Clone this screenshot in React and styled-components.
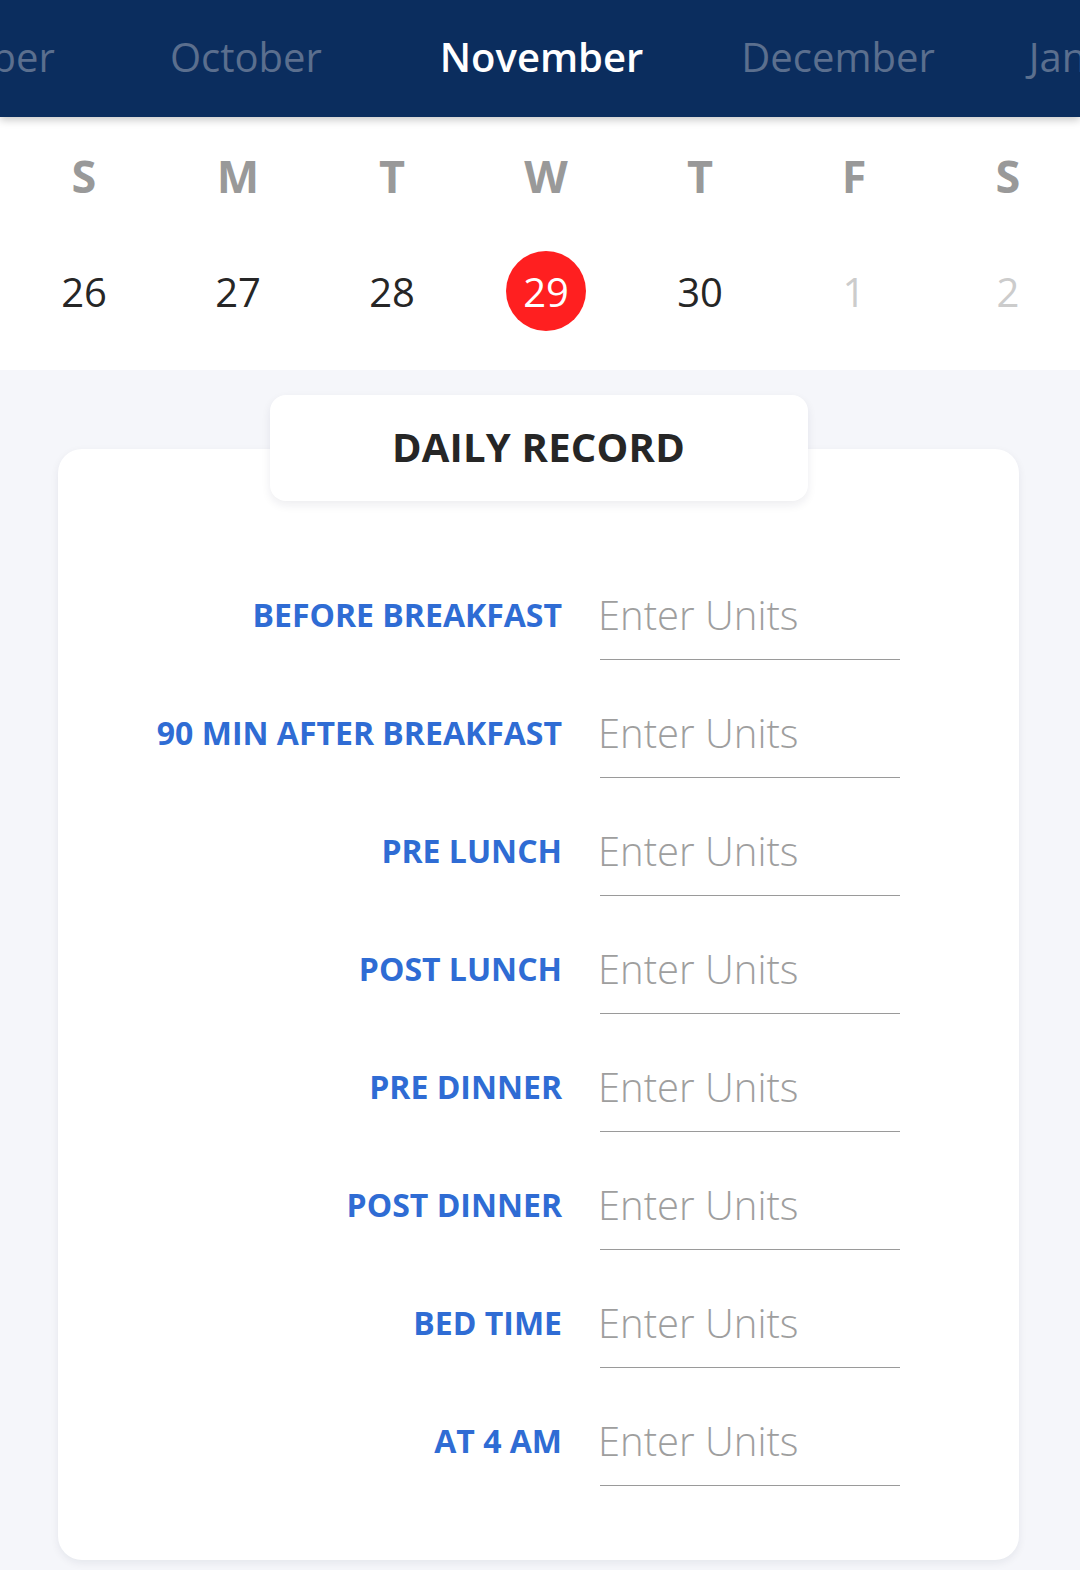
import React from "react";
import styled, { createGlobalStyle } from "styled-components";

const GlobalStyle = createGlobalStyle`
  body {
    margin: 0;
    background: #f5f6fa;
    font-family: "Open Sans", "Noto Sans", sans-serif;
  }
  * {
    box-sizing: border-box;
  }
`;

const Page = styled.div`
  width: 1080px;
  min-height: 1570px;
  background: #f5f6fa;
  overflow: hidden;
`;

const MonthBar = styled.div`
  position: relative;
  z-index: 2;
  height: 117px;
  padding-bottom: 4px;
  background: #0b2d5e;
  display: flex;
  align-items: center;
  box-shadow: 0 3px 8px rgba(0, 0, 0, 0.22);
  overflow: hidden;
`;

const MonthStrip = styled.div`
  display: flex;
`;

const Month = styled.div`
  flex: none;
  margin-left: ${(p) => p.lead}px;
  font-size: 40px;
  line-height: 56px;
  font-weight: ${(p) => (p.active ? 600 : 400)};
  color: ${(p) => (p.active ? "#ffffff" : "#5b6f8e")};
  white-space: nowrap;
`;

const Calendar = styled.div`
  background: #ffffff;
  padding: 0 0 39px 7px;
`;

const WeekRow = styled.div`
  display: grid;
  grid-template-columns: repeat(7, 154px);
  align-items: center;
  height: ${(p) => p.height}px;
  margin-top: ${(p) => p.top || 0}px;
`;

const DayLetter = styled.div`
  text-align: center;
  font-size: 45px;
  font-weight: 700;
  color: #999999;
  line-height: 1;
`;

const DateCell = styled.div`
  display: flex;
  justify-content: center;
`;

const DateNum = styled.div`
  width: 80px;
  height: 80px;
  border-radius: 50%;
  display: flex;
  align-items: center;
  justify-content: center;
  font-size: 40px;
  font-weight: 400;
  background: ${(p) => (p.selected ? "#ff1f20" : "transparent")};
  color: ${(p) => (p.selected ? "#ffffff" : p.muted ? "#cccccc" : "#262626")};
`;

const Content = styled.div`
  padding: 25px 61px 10px 58px;
  display: flex;
  flex-direction: column;
  align-items: center;
`;

const TitleCard = styled.div`
  position: relative;
  z-index: 1;
  width: 538px;
  height: 106px;
  margin-bottom: -52px;
  padding-bottom: 4px;
  background: #ffffff;
  border-radius: 16px;
  box-shadow: 0 4px 10px rgba(20, 30, 60, 0.08);
  display: flex;
  align-items: center;
  justify-content: center;
  font-size: 40px;
  font-weight: 700;
  color: #262626;
  letter-spacing: 0.2px;
`;

const RecordCard = styled.div`
  width: 961px;
  background: #ffffff;
  border-radius: 24px;
  box-shadow: 0 3px 8px rgba(20, 30, 60, 0.07);
  padding: 121px 0 74px;
  display: flex;
  flex-direction: column;
  gap: 28px;
`;

const Row = styled.div`
  display: grid;
  grid-template-columns: 504px 300px;
  column-gap: 38px;
  align-items: center;
`;

const Label = styled.label`
  text-align: right;
  font-size: 32px;
  font-weight: 700;
  color: #2f6cd4;
  white-space: nowrap;
  margin-top: -2px;
`;

const UnitInput = styled.input`
  width: 300px;
  height: 90px;
  border: none;
  border-bottom: 1.5px solid #9a9a9a;
  outline: none;
  padding: 0;
  text-indent: -2px;
  background: transparent;
  font-family: "Open Sans", sans-serif;
  font-size: 40px;
  font-weight: 300;
  color: #262626;

  &::placeholder {
    color: #9e9e9e;
    font-weight: 300;
  }
`;

const months = [
  { name: "September", lead: -151 },
  { name: "October", lead: 115 },
  { name: "November", lead: 118, active: true },
  { name: "December", lead: 98 },
  { name: "January", lead: 94 },
];
const letters = ["S", "M", "T", "W", "T", "F", "S"];
const dates = [
  { n: 26 },
  { n: 27 },
  { n: 28 },
  { n: 29, selected: true },
  { n: 30 },
  { n: 1, muted: true },
  { n: 2, muted: true },
];
const slots = [
  "BEFORE BREAKFAST",
  "90 MIN AFTER BREAKFAST",
  "PRE LUNCH",
  "POST LUNCH",
  "PRE DINNER",
  "POST DINNER",
  "BED TIME",
  "AT 4 AM",
];

export default function App() {
  return (
    <Page>
      <GlobalStyle />
      <MonthBar>
        <MonthStrip>
          {months.map((m) => (
            <Month key={m.name} lead={m.lead} active={m.active}>
              {m.name}
            </Month>
          ))}
        </MonthStrip>
      </MonthBar>
      <Calendar>
        <WeekRow height={117}>
          {letters.map((l, i) => (
            <DayLetter key={i}>{l}</DayLetter>
          ))}
        </WeekRow>
        <WeekRow height={80} top={17}>
          {dates.map((d) => (
            <DateCell key={d.n}>
              <DateNum selected={d.selected} muted={d.muted}>
                {d.n}
              </DateNum>
            </DateCell>
          ))}
        </WeekRow>
      </Calendar>
      <Content>
        <TitleCard>DAILY RECORD</TitleCard>
        <RecordCard>
          {slots.map((s) => (
            <Row key={s}>
              <Label>{s}</Label>
              <UnitInput placeholder="Enter Units" />
            </Row>
          ))}
        </RecordCard>
      </Content>
    </Page>
  );
}
